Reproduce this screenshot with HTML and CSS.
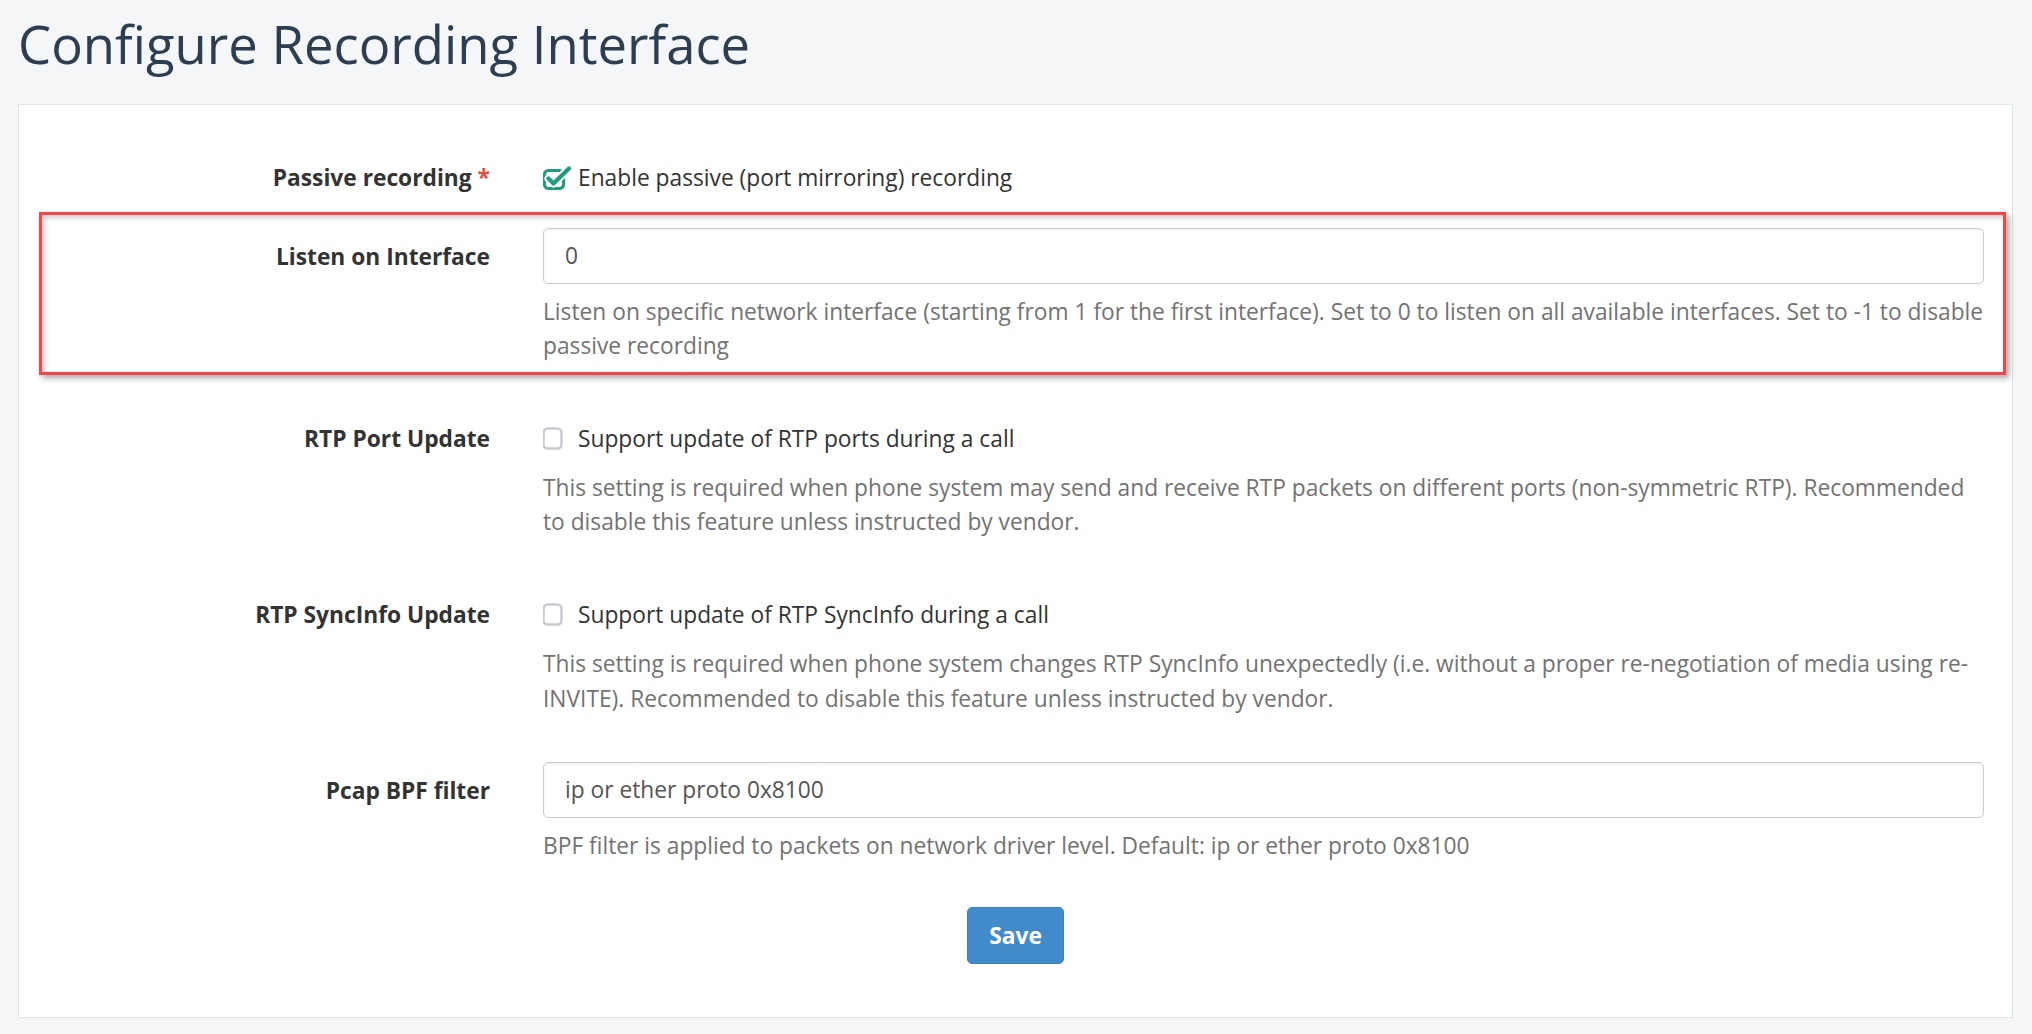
FILE: index.html
```html
<!DOCTYPE html>
<html>
  <head>
    <meta charset="utf-8">
    <title>Configure Recording Interface</title>
    <link rel="stylesheet" href="styles.css">
  </head>
  <body>
    <div class="page">
      <h1>Configure Recording Interface</h1>

      <div class="panel">
        <form class="form">
          <div class="row first">
            <label class="label">Passive recording <span class="req">*</span></label>
            <div class="field">
              <div class="check">
                <svg class="box" width="30" height="24" viewBox="0 0 30 24">
                  <rect x="1.5" y="4.5" width="19" height="18" rx="4" fill="none" stroke="#1f9d7f" stroke-width="3.2"/>
                  <path d="M5.5 12.5 L10.5 17.5 L26 2.5" fill="none" stroke="#fff" stroke-width="8" stroke-linecap="round" stroke-linejoin="round"/>
                  <path d="M5.5 12.5 L10.5 17.5 L26 2.5" fill="none" stroke="#1f9d7f" stroke-width="4.2" stroke-linecap="round" stroke-linejoin="round"/>
                </svg>
                <span>Enable passive (port mirroring) recording</span>
              </div>
            </div>
          </div>

          <div class="row marked">
            <label class="label">Listen on Interface</label>
            <div class="field">
              <div class="input">0</div>
              <p class="help">Listen on specific network interface (starting from 1 for the first interface). Set to 0 to listen on all available interfaces. Set to -1 to disable passive recording</p>
            </div>
          </div>

          <div class="row">
            <label class="label">RTP Port Update</label>
            <div class="field">
              <div class="check">
                <svg class="box" width="30" height="24" viewBox="0 0 30 24">
                  <rect x="0.5" y="1.5" width="18" height="20" rx="4" fill="none" stroke="#c6cbd2" stroke-width="2.5"/>
                </svg>
                <span>Support update of RTP ports during a call</span>
              </div>
              <p class="help">This setting is required when phone system may send and receive RTP packets on different ports (non-symmetric RTP). Recommended to disable this feature unless instructed by vendor.</p>
            </div>
          </div>

          <div class="row">
            <label class="label">RTP SyncInfo Update</label>
            <div class="field">
              <div class="check">
                <svg class="box" width="30" height="24" viewBox="0 0 30 24">
                  <rect x="0.5" y="1.5" width="18" height="20" rx="4" fill="none" stroke="#c6cbd2" stroke-width="2.5"/>
                </svg>
                <span>Support update of RTP SyncInfo during a call</span>
              </div>
              <p class="help">This setting is required when phone system changes RTP SyncInfo unexpectedly (i.e. without a proper re-negotiation of media using re-INVITE). Recommended to disable this feature unless instructed by vendor.</p>
            </div>
          </div>

          <div class="row">
            <label class="label">Pcap BPF filter</label>
            <div class="field">
              <div class="input">ip or ether proto 0x8100</div>
              <p class="help">BPF filter is applied to packets on network driver level. Default: ip or ether proto 0x8100</p>
            </div>
          </div>

          <div class="actions">
            <button type="button" class="btn">Save</button>
          </div>
        </form>
      </div>
    </div>
  </body>
</html>
```

FILE: styles.css
```css
body {
  margin: 0;
  background: #f5f6f8;
  font-family: "Open Sans", "Noto Sans", sans-serif;
  font-size: 22.75px;
  line-height: 34.5px;
  color: #333;
}

.page {
  padding: 0 19px 0 18px;
}

h1 {
  margin: 15px 0 32px;
  font-size: 52.6px;
  line-height: 57px;
  font-weight: 400;
  color: #2c3e50;
}

.panel {
  background: #fff;
  border: 1px solid #e0e3e7;
}

.form {
  padding: 27px 0 53px;
}

.row {
  display: grid;
  grid-template-columns: 448px 1fr;
  column-gap: 53px;
  margin: 0 6px 16.75px 20px;
  padding: 13px 19px 10px 0;
  border: 3px solid transparent;
}
.row.first { margin-bottom: 0; }
.row.marked {
  margin-bottom: 18px;
  padding-bottom: 8.75px;
  border-color: #f44649;
  box-shadow: 3px 3px 6px rgba(0, 0, 0, .35), inset 3px 3px 5px rgba(0, 0, 0, .2);
}

.label {
  padding-top: 12.5px;
  text-align: right;
  font-weight: 700;
  color: #333;
}
.req { color: #e74c3c; }

.check {
  display: flex;
  align-items: center;
  padding: 12.5px 0 3.5px;
}
.check .box {
  flex: none;
  margin-right: 5px;
}

.input {
  height: 56px;
  box-sizing: border-box;
  padding: 0 21px;
  border: 1px solid #ccc;
  border-radius: 5px;
  box-shadow: inset 0 1px 2px rgba(0, 0, 0, .08);
  line-height: 54px;
  color: #555;
}

.help {
  margin: 11px 0 0;
  color: #737373;
}

.actions {
  margin-top: 30.75px;
  text-align: center;
}

.btn {
  height: 57px;
  padding: 0 21px;
  border: 1px solid #3a7fc0;
  border-radius: 5px;
  background: #428bca;
  color: #fff;
  font: 700 22.75px "Open Sans", sans-serif;
}
```
